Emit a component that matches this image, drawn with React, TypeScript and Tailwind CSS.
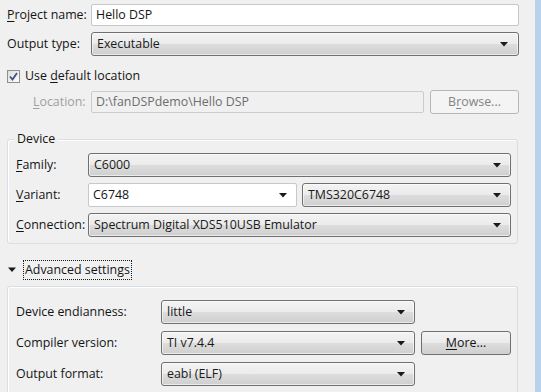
import React from 'react';

const FONT = { fontFamily: '"Open Sans", "Noto Sans", sans-serif' };

const Arrow = () => (
    <svg width="8" height="5" viewBox="0 0 8 5" className="shrink-0">
        <path d="M0 0 H8 L4 4.5 Z" fill="#1a1a1a" />
    </svg>
);

const Combo = ({ value, className = '' }: { value: string; className?: string }) => (
    <div
        className={`h-6 flex items-center justify-between pl-[5px] pr-[9px] rounded-[3px] border border-[#707070] bg-[linear-gradient(#f3f3f3_0%,#ebebeb_50%,#dddddd_50%,#cfcfcf_100%)] shadow-[inset_0_0_0_1px_rgba(255,255,255,0.6)] text-[#1a1a1a] ${className}`}
    >
        <span className="whitespace-nowrap">{value}</span>
        <Arrow />
    </div>
);

const Label = ({ text, mn, className = '' }: { text: string; mn?: number; className?: string }) => {
    if (mn === undefined) return <span className={`whitespace-nowrap ${className}`}>{text}</span>;
    return (
        <span className={`whitespace-nowrap ${className}`}>
            {text.slice(0, mn)}
            <span className="underline underline-offset-2">{text[mn]}</span>
            {text.slice(mn + 1)}
        </span>
    );
};

const App: React.FC = () => {
    return (
        <div className="w-[541px] h-[392px] bg-[#f0f0f0] flex overflow-hidden text-[12.4px] text-[#141414]" style={FONT}>
            <div className="flex-1 flex flex-col pl-[7px] pr-[16px] pt-[4px]">
                {/* project name */}
                <div className="flex items-center h-[22px]">
                    <Label text="Project name:" mn={0} className="w-[84px]" />
                    <div className="flex-1 h-[22px] flex items-center px-[4px] bg-white border border-[#c5c8cc] rounded-[2px]">Hello DSP</div>
                </div>

                {/* output type */}
                <div className="flex items-center mt-[6px]">
                    <Label text="Output type:" className="w-[84px]" />
                    <Combo value="Executable" className="flex-1 pr-[10px]" />
                </div>

                {/* default location */}
                <div className="flex items-center gap-[5px] mt-[13px] h-[14px]">
                    <div className="w-[13px] h-[13px] border border-[#8e8f8f] bg-[linear-gradient(135deg,#dcdcdc,#fdfdfd)] flex items-center justify-center">
                        <svg width="9" height="9" viewBox="0 0 9 9">
                            <path d="M1 4.5 L3.5 7.5 L8 1" stroke="#3b4f88" strokeWidth="1.8" fill="none" />
                        </svg>
                    </div>
                    <Label text="Use default location" mn={4} />
                </div>

                <div className="flex items-center mt-[7px] h-6">
                    <Label text="Location:" mn={0} className="w-[84px] pl-[26px] text-[#a0a0a0]" />
                    <div className="w-[333px] h-[22px] flex items-center px-[4px] border border-[#c9cbcd] rounded-[2px] text-[#6d6d6d]">
                        D:\fanDSPdemo\Hello DSP
                    </div>
                    <div className="ml-[6px] w-[89px] h-6 flex items-center justify-center border border-[#b5b8ba] rounded-[3px] bg-[#f4f4f4] text-[#838383]">
                        <Label text="Browse..." mn={1} />
                    </div>
                </div>

                {/* device group */}
                <div className="relative mt-[25px] mr-[1px] border border-[#d5dfe5] rounded-[3px] shadow-[inset_1px_1px_0_#ffffff] pl-[8px] pr-[6px] pt-[13px] pb-[6px] flex flex-col gap-[6px]">
                    <span className="absolute -top-[10px] left-[6px] px-[3px] bg-[#f0f0f0]">Device</span>
                    <div className="flex items-center">
                        <Label text="Family:" mn={0} className="w-[72px]" />
                        <Combo value="C6000" className="flex-1" />
                    </div>
                    <div className="flex items-center">
                        <Label text="Variant:" mn={0} className="w-[72px]" />
                        <div className="w-[209px] h-6 flex items-center justify-between pl-[4px] pr-[9px] bg-white border border-[#c5c8cc] rounded-[2px]">
                            <span>C6748</span>
                            <Arrow />
                        </div>
                        <Combo value="TMS320C6748" className="flex-1 ml-[5px]" />
                    </div>
                    <div className="flex items-center">
                        <Label text="Connection:" mn={0} className="w-[72px]" />
                        <Combo value="Spectrum Digital XDS510USB Emulator" className="flex-1" />
                    </div>
                </div>

                {/* advanced settings */}
                <div className="flex items-center mt-[16px] h-[20px]">
                    <svg width="9" height="6" viewBox="0 0 9 6" className="ml-[1px]">
                        <path d="M0 0.5 H8 L4 5 Z" fill="#1a1a1a" />
                    </svg>
                    <span className="ml-[6px] h-[20px] flex items-center px-[1px] border border-dotted border-[#1a1a1a]">Advanced settings</span>
                </div>

                <div className="mt-[6px] mr-[1px] flex-1 border-t border-l border-r border-[#d5dfe5] rounded-t-[3px] shadow-[inset_1px_1px_0_#ffffff] pl-[8px] pt-[13px] flex flex-col gap-[7px]">
                    <div className="flex items-center">
                        <Label text="Device endianness:" className="w-[145px]" />
                        <Combo value="little" className="w-[254px]" />
                    </div>
                    <div className="flex items-center">
                        <Label text="Compiler version:" className="w-[145px]" />
                        <Combo value="TI v7.4.4" className="w-[254px]" />
                        <div className="ml-[6px] w-[90px] h-6 flex items-center justify-center rounded-[3px] border border-[#707070] bg-[linear-gradient(#f3f3f3_0%,#ebebeb_50%,#dddddd_50%,#cfcfcf_100%)]">
                            <Label text="More..." mn={0} />
                        </div>
                    </div>
                    <div className="flex items-center">
                        <Label text="Output format:" className="w-[145px]" />
                        <Combo value="eabi (ELF)" className="w-[254px]" />
                    </div>
                </div>
            </div>
            <div className="w-[6px] h-full bg-[#b9d1ea]" />
        </div>
    );
};

export default App;
